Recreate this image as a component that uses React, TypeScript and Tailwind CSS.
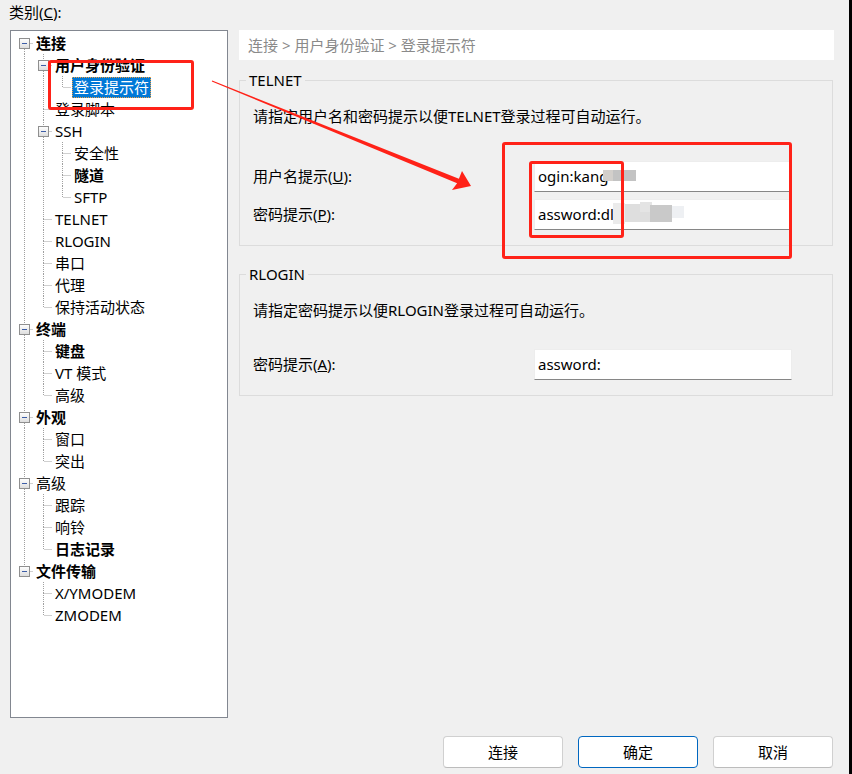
import React from "react";

type TreeNode = {
  label: string;
  level: number;
  bold?: boolean;
  children?: boolean;
  selected?: boolean;
};

const nodes: TreeNode[] = [
  { label: "连接", level: 0, bold: true, children: true },
  { label: "用户身份验证", level: 1, bold: true, children: true },
  { label: "登录提示符", level: 2, selected: true },
  { label: "登录脚本", level: 1 },
  { label: "SSH", level: 1, children: true },
  { label: "安全性", level: 2 },
  { label: "隧道", level: 2, bold: true },
  { label: "SFTP", level: 2 },
  { label: "TELNET", level: 1 },
  { label: "RLOGIN", level: 1 },
  { label: "串口", level: 1 },
  { label: "代理", level: 1 },
  { label: "保持活动状态", level: 1 },
  { label: "终端", level: 0, bold: true, children: true },
  { label: "键盘", level: 1, bold: true },
  { label: "VT 模式", level: 1 },
  { label: "高级", level: 1 },
  { label: "外观", level: 0, bold: true, children: true },
  { label: "窗口", level: 1 },
  { label: "突出", level: 1 },
  { label: "高级", level: 0, children: true },
  { label: "跟踪", level: 1 },
  { label: "响铃", level: 1 },
  { label: "日志记录", level: 1, bold: true },
  { label: "文件传输", level: 0, bold: true, children: true },
  { label: "X/YMODEM", level: 1 },
  { label: "ZMODEM", level: 1 },
];

function hasNext(i: number): boolean {
  const L = nodes[i].level;
  for (let j = i + 1; j < nodes.length; j++) {
    if (nodes[j].level < L) return false;
    if (nodes[j].level === L) return true;
  }
  return false;
}

function ancestorAt(i: number, k: number): number {
  for (let j = i - 1; j >= 0; j--) if (nodes[j].level === k) return j;
  return -1;
}

const DOT = "#a0a0a0";

function Connector({ i }: { i: number }) {
  const n = nodes[i];
  const L = n.level;
  const w = 19 * (L + 1);
  const parts: React.ReactNode[] = [];
  for (let k = 0; k < L; k++) {
    const a = ancestorAt(i, k);
    if (a >= 0 && hasNext(a)) {
      const x = 10 + 19 * k + 0.5;
      parts.push(
        <line key={"v" + k} x1={x} y1={0} x2={x} y2={22} stroke={DOT} strokeDasharray="1 1" />
      );
    }
  }
  const cx = 10 + 19 * L + 0.5;
  if (!(L === 0 && i === 0)) {
    parts.push(<line key="top" x1={cx} y1={0} x2={cx} y2={11} stroke={DOT} strokeDasharray="1 1" />);
  }
  if (hasNext(i)) {
    parts.push(<line key="bot" x1={cx} y1={11} x2={cx} y2={22} stroke={DOT} strokeDasharray="1 1" />);
  }
  parts.push(
    <line key="h" x1={cx + 1} y1={11.5} x2={w} y2={11.5} stroke={DOT} strokeDasharray="1 1" />
  );
  if (n.children) {
    const bx = 5.5 + 19 * L;
    parts.push(
      <g key="box">
        <defs>
          <linearGradient id={"g" + i} x1="0" y1="0" x2="0" y2="1">
            <stop offset="0" stopColor="#ffffff" />
            <stop offset="1" stopColor="#dcdcdc" />
          </linearGradient>
        </defs>
        <rect x={bx} y={6.5} width={10} height={10} fill={`url(#g${i})`} stroke="#8f8f8f" />
        <line x1={bx + 2.5} y1={11.5} x2={bx + 7.5} y2={11.5} stroke="#3d5da6" />
      </g>
    );
  }
  return (
    <svg width={w} height={22} className="shrink-0 block">
      {parts}
    </svg>
  );
}

function Tree() {
  return (
    <div className="h-[688px] w-[218px] border border-[#828790] bg-white pt-px">
      {nodes.map((n, i) => (
        <div key={i} className="flex h-[22px] items-end pl-[3px]">
          <Connector i={i} />
          <span
            className={
              "ml-px h-[21px] whitespace-nowrap px-[2px] leading-[21px] " +
              (n.bold ? "font-bold " : "") +
              (n.selected
                ? "bg-[#0078d7] text-white outline outline-1 outline-dotted -outline-offset-1 outline-[#f0a040]"
                : "text-black")
            }
          >
            {n.label}
          </span>
        </div>
      ))}
    </div>
  );
}

function Input({ value, children }: { value: string; children?: React.ReactNode }) {
  return (
    <div className="relative h-[31px] w-[258px] border border-[#ededed] border-b-[#868686] bg-white pl-[3px] leading-[29px] text-black">
      {value}
      {children}
    </div>
  );
}

function Group({
  title,
  className,
  children,
}: {
  title: string;
  className?: string;
  children: React.ReactNode;
}) {
  return (
    <div className={"relative w-[594px] border border-[#dcdcdc] pb-[15px] pl-[13px] pt-[25px] " + (className ?? "")}>
      <span className="absolute -top-[11px] left-[6px] bg-[#f0f0f0] px-[3px] leading-[20px] text-black">
        {title}
      </span>
      {children}
    </div>
  );
}

function Btn({ label, primary }: { label: string; primary?: boolean }) {
  return (
    <button
      className={
        "h-[32px] w-[120px] rounded-[4px] border bg-white text-black " +
        (primary ? "border-[#0067c0]" : "border-[#d0d0d0] border-b-[#bcbcbc]")
      }
    >
      {label}
    </button>
  );
}

export default function App() {
  return (
    <div
      className="relative flex h-[774px] w-[852px] overflow-hidden bg-[#f0f0f0] text-[15px]"
      style={{ fontFamily: '"Noto Sans", "Noto Sans CJK SC", sans-serif' }}
    >
      <div className="flex w-[849px] flex-col">
        <div className="flex items-start">
          {/* left */}
          <div className="ml-[10px] flex w-[218px] flex-col">
            <div className="-ml-px h-[30px] leading-[24px] text-black">
              类别(<span className="underline">C</span>):
            </div>
            <Tree />
          </div>
          {/* right */}
          <div className="ml-[11px] flex w-[595px] flex-col pt-[30px]">
            <div className="h-[30px] bg-white pl-[9px] leading-[30px] text-[#8a8a8a]">
              连接 &gt; 用户身份验证 &gt; 登录提示符
            </div>
            <Group title="TELNET" className="mt-[20px]">
              <div className="leading-[20px] text-black">请指定用户名和密码提示以便TELNET登录过程可自动运行。</div>
              <div className="mt-[35px] flex items-center">
                <div className="w-[281px] text-black">
                  用户名提示(<span className="underline">U</span>):
                </div>
                <Input value="ogin:kang">
                  <span className="absolute left-[68px] top-[8px] h-[11px] w-[10px] bg-[#d3cfcb]" />
                  <span className="absolute left-[78px] top-[8px] h-[11px] w-[23px] bg-[#c3c3c3]" />
                </Input>
              </div>
              <div className="mt-[7px] flex items-center">
                <div className="w-[281px] text-black">
                  密码提示(<span className="underline">P</span>):
                </div>
                <Input value="assword:dl">
                  <span className="absolute left-[78px] top-[3px] h-[21px] w-[12px] bg-[#ebebeb]" />
                  <span className="absolute left-[90px] top-[4px] h-[18px] w-[25px] bg-[#dedede]" />
                  <span className="absolute left-[105px] top-[2px] h-[10px] w-[12px] bg-[#e4e4e4]" />
                  <span className="absolute left-[115px] top-[5px] h-[17px] w-[22px] bg-[#c9c9c9]" />
                  <span className="absolute left-[137px] top-[6px] h-[12px] w-[12px] bg-[#eef0f3]" />
                </Input>
              </div>
            </Group>
            <Group title="RLOGIN" className="mt-[28px]">
              <div className="leading-[20px] text-black">请指定密码提示以便RLOGIN登录过程可自动运行。</div>
              <div className="mt-[29px] flex items-center">
                <div className="w-[281px] text-black">
                  密码提示(<span className="underline">A</span>):
                </div>
                <Input value="assword:" />
              </div>
            </Group>
          </div>
        </div>
        <div className="mt-[18px] flex justify-end gap-[15px] pr-[16px]">
          <Btn label="连接" />
          <Btn label="确定" primary />
          <Btn label="取消" />
        </div>
      </div>
      <div className="w-[3px] bg-black" />

      {/* annotations overlay */}
      <div className="pointer-events-none absolute inset-0">
        <div className="absolute left-[48px] top-[60px] h-[50px] w-[146px] rounded-[3px] border-[3px] border-[#ff2218]" />
        <div className="absolute left-[502px] top-[142px] h-[117px] w-[290px] rounded-[3px] border-[3px] border-[#ff2218]" />
        <div className="absolute left-[529px] top-[161px] h-[77px] w-[95px] rounded-[3px] border-[3px] border-[#ff2218]" />
        <svg className="absolute left-0 top-0" width={852} height={774}>
          <polygon
            points="211.8,81.5 212.2,80.5 458.9,178.7 462,171 471,186 452,190 457.1,183.3"
            fill="#ff2218"
          />
        </svg>
      </div>
    </div>
  );
}
